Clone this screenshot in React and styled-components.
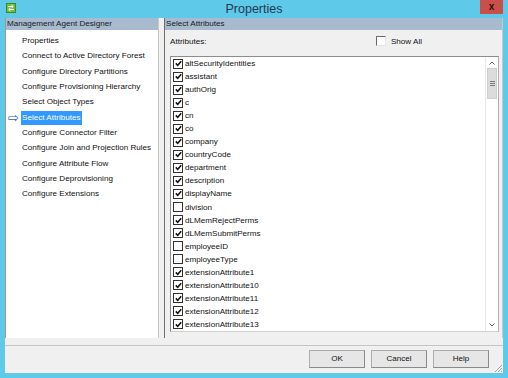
import styled, { createGlobalStyle } from 'styled-components';

const steps = [
  'Properties',
  'Connect to Active Directory Forest',
  'Configure Directory Partitions',
  'Configure Provisioning Hierarchy',
  'Select Object Types',
  'Select Attributes',
  'Configure Connector Filter',
  'Configure Join and Projection Rules',
  'Configure Attribute Flow',
  'Configure Deprovisioning',
  'Configure Extensions'
];

const attributes = [
  { name: 'altSecurityIdentities', on: true },
  { name: 'assistant', on: true },
  { name: 'authOrig', on: true },
  { name: 'c', on: true },
  { name: 'cn', on: true },
  { name: 'co', on: true },
  { name: 'company', on: true },
  { name: 'countryCode', on: true },
  { name: 'department', on: true },
  { name: 'description', on: true },
  { name: 'displayName', on: true },
  { name: 'division', on: false },
  { name: 'dLMemRejectPerms', on: true },
  { name: 'dLMemSubmitPerms', on: true },
  { name: 'employeeID', on: false },
  { name: 'employeeType', on: false },
  { name: 'extensionAttribute1', on: true },
  { name: 'extensionAttribute10', on: true },
  { name: 'extensionAttribute11', on: true },
  { name: 'extensionAttribute12', on: true },
  { name: 'extensionAttribute13', on: true }
];

const GlobalStyle = createGlobalStyle`
  body {
    margin: 0;
    font-family: 'Liberation Sans', Arial, sans-serif;
    font-size: 8.1px;
    color: #111;
  }
`;

const Window = styled.div`
  width: 508px;
  height: 378px;
  background: #5fc9ea;
  display: flex;
  flex-direction: column;
  overflow: hidden;
`;

const TitleBar = styled.div`
  height: 18px;
  display: grid;
  grid-template-columns: 40px 1fr 40px;
  align-items: start;
`;

const AppIcon = styled.svg`
  margin: 3px 0 0 6px;
  width: 10px;
  height: 10px;
`;

const Title = styled.div`
  text-align: center;
  font-family: 'Liberation Sans', Arial, sans-serif;
  font-size: 12.5px;
  line-height: 18px;
  color: #1f3a50;
`;

const CloseButton = styled.div`
  justify-self: end;
  margin-right: 5px;
  width: 23px;
  height: 14px;
  background: #c9504a;
  color: #2a1010;
  font-size: 10px;
  font-weight: bold;
  line-height: 13px;
  text-align: center;
`;

const Body = styled.div`
  flex: 1;
  margin: 0 5px 5px;
  background: #f0f0f0;
  display: flex;
  flex-direction: column;
`;

const Panes = styled.div`
  display: flex;
  height: 320px;
  gap: 5px;
`;

const Pane = styled.div`
  display: flex;
  flex-direction: column;
  width: ${(p) => (p.$width ? `${p.$width}px` : 'auto')};
  flex: ${(p) => (p.$width ? 'none' : '1')};
  border-left: 1px solid ${(p) => (p.$width ? '#9a9a9a' : '#6f6f6f')};
  border-right: 1px solid #c8c8c8;
`;

const PaneHeader = styled.div`
  height: 12px;
  line-height: 12px;
  padding-left: 1px;
  background: #a8bacd;
  color: #15202b;
`;

const StepList = styled.div`
  flex: 1;
  background: #fff;
  padding-top: 3.5px;
`;

const Step = styled.div`
  height: 15.3px;
  display: flex;
  align-items: center;
`;

const StepArrow = styled.span`
  width: 15px;
  text-align: center;
  color: #2a62b5;
  font-size: 13px;
  line-height: 12px;
  font-family: 'DejaVu Sans', sans-serif;
`;

const StepLabel = styled.span`
  padding: 1px 1px;
  line-height: 12px;
  background: ${(p) => (p.$active ? '#3399ff' : 'transparent')};
  color: ${(p) => (p.$active ? '#fff' : '#111')};
`;

const AttrPanel = styled.div`
  flex: 1;
  display: flex;
  flex-direction: column;
  padding: 4px 3px 7px 5px;
`;

const AttrTop = styled.div`
  display: flex;
  align-items: center;
  justify-content: space-between;
  height: 14px;
  margin-bottom: 8px;
`;

const ShowAll = styled.label`
  display: flex;
  align-items: center;
  gap: 5px;
  margin-right: 77px;
`;

const FlatBox = styled.span`
  width: 8px;
  height: 8px;
  border-top: 1px solid #6a6a6a;
  border-left: 1px solid #6a6a6a;
  border-right: 1px solid #e6e6e6;
  border-bottom: 1px solid #e6e6e6;
  background: #fff;
`;

const ListBox = styled.div`
  flex: 1;
  display: flex;
  background: #fff;
  border: 1px solid #8c8c8c;
  border-right-color: #b0b0b0;
  border-bottom-color: #d0d0d0;
  min-height: 0;
`;

const Items = styled.div`
  flex: 1;
  padding: 0 0 0 2px;
  overflow: hidden;
`;

const Item = styled.div`
  height: 13.05px;
  display: flex;
  align-items: center;
  gap: 2px;
`;

const CheckBox = styled.span`
  width: 8px;
  height: 8px;
  border: 1px solid #333;
  background: #fff;
  display: flex;
  align-items: center;
  justify-content: center;
`;

const ScrollBar = styled.div`
  width: 12px;
  display: flex;
  flex-direction: column;
  background: #fff;
  border-left: 1px solid #e8e8e8;
`;

const ScrollArrow = styled.div`
  height: 11px;
  display: flex;
  align-items: center;
  justify-content: center;
`;

const Thumb = styled.div`
  height: 29px;
  margin: 0 1px;
  background: #dcdcdc;
  border: 1px solid #cfcfcf;
  display: flex;
  flex-direction: column;
  align-items: center;
  justify-content: center;
  gap: 1px;
`;

const Grip = styled.span`
  width: 5px;
  height: 1px;
  background: #7a7a7a;
`;

const Track = styled.div`
  flex: 1;
`;

const ButtonBar = styled.div`
  flex: 1;
  margin-top: 7px;
  border-top: 1px solid #c5c5c5;
  display: flex;
  justify-content: flex-end;
  align-items: flex-start;
  gap: 6px;
  padding: 4px 14px 0 0;
  position: relative;
`;

const Button = styled.div`
  width: 54px;
  height: 16px;
  line-height: 16px;
  text-align: center;
  background: #e6e6e6;
  border: 1px solid #adadad;
  border-right-color: #8a8a8a;
  border-bottom-color: #8a8a8a;
`;

const SizeGrip = styled.svg`
  position: absolute;
  right: 0;
  bottom: 0;
`;

function Check() {
  return (
    <svg width="7" height="7" viewBox="0 0 7 7">
      <path d="M0.8 3.4 L2.7 5.3 L6.2 1.2" fill="none" stroke="#111" strokeWidth="1.5" />
    </svg>
  );
}

function App() {
  return (
    <Window>
      <GlobalStyle />
      <TitleBar>
        <AppIcon viewBox="0 0 10 10">
          <rect width="10" height="10" fill="#6fbf3a" />
          <rect x="0.5" y="0.5" width="9" height="9" fill="none" stroke="#3e8a1d" />
          <path d="M2 3.5 H7 M5.5 2 L7.3 3.5 L5.5 5 M8 6.5 H3 M4.5 5 L2.7 6.5 L4.5 8" stroke="#fff" strokeWidth="1" fill="none" />
        </AppIcon>
        <Title>Properties</Title>
        <CloseButton>x</CloseButton>
      </TitleBar>
      <Body>
        <Panes>
          <Pane $width={152}>
            <PaneHeader>Management Agent Designer</PaneHeader>
            <StepList>
              {steps.map((s) => {
                const active = s === 'Select Attributes';
                return (
                  <Step key={s}>
                    <StepArrow>{active ? '⇨' : ''}</StepArrow>
                    <StepLabel $active={active}>{s}</StepLabel>
                  </Step>
                );
              })}
            </StepList>
          </Pane>
          <Pane>
            <PaneHeader>Select Attributes</PaneHeader>
            <AttrPanel>
              <AttrTop>
                <span>Attributes:</span>
                <ShowAll>
                  <FlatBox />
                  Show All
                </ShowAll>
              </AttrTop>
              <ListBox>
                <Items>
                  {attributes.map((a) => (
                    <Item key={a.name}>
                      <CheckBox>{a.on && <Check />}</CheckBox>
                      {a.name}
                    </Item>
                  ))}
                </Items>
                <ScrollBar>
                  <ScrollArrow>
                    <svg width="6" height="4" viewBox="0 0 6 4">
                      <path d="M0.5 3.5 L3 1 L5.5 3.5" fill="none" stroke="#555" />
                    </svg>
                  </ScrollArrow>
                  <Thumb>
                    <Grip />
                    <Grip />
                    <Grip />
                  </Thumb>
                  <Track />
                  <ScrollArrow>
                    <svg width="6" height="4" viewBox="0 0 6 4">
                      <path d="M0.5 0.5 L3 3 L5.5 0.5" fill="none" stroke="#555" />
                    </svg>
                  </ScrollArrow>
                </ScrollBar>
              </ListBox>
            </AttrPanel>
          </Pane>
        </Panes>
        <ButtonBar>
          <Button>OK</Button>
          <Button>Cancel</Button>
          <Button>Help</Button>
          <SizeGrip width="10" height="10" viewBox="0 0 10 10">
            <path d="M9 2 L2 9 M9 5 L5 9 M9 8 L8 9" stroke="#a0a0a0" />
          </SizeGrip>
        </ButtonBar>
      </Body>
    </Window>
  );
}

export default App;
